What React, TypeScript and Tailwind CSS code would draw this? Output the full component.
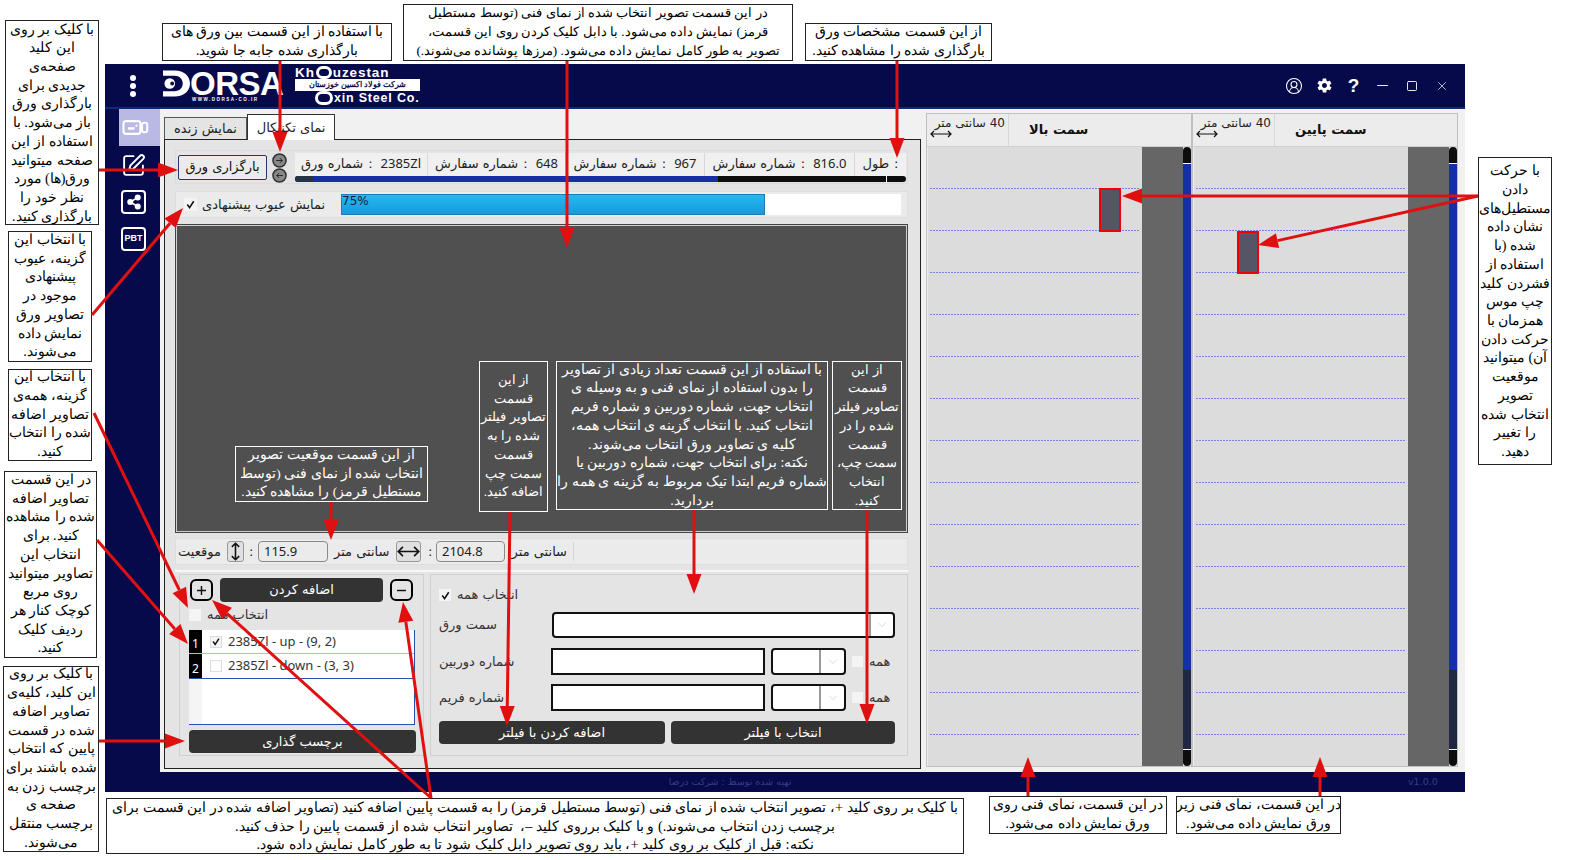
import { CircleUserRound, Minus, Square, SquarePen, X } from "lucide-react";
import { IoMdSettings } from "react-icons/io";

// Caixa de anotacao por cima da tela (uma linha por item, quebras iguais ao original)
function Callout({ className, lines, dark }: { className: string; lines: string[]; dark?: boolean }) {
  return (
    <div
      dir="rtl"
      className={`absolute z-10 flex flex-col items-center justify-center overflow-hidden whitespace-pre text-center font-['Liberation_Serif',serif] leading-[18.7px] ${
        dark ? "border border-white bg-[#505050] text-white" : "border border-[#222] bg-white text-black"
      } ${className}`}
    >
      {lines.map((l, i) => (
        <div key={i}>{l}</div>
      ))}
    </div>
  );
}

// Seta vermelha com ponta triangular
function Arrow({ x1, y1, x2, y2 }: { x1: number; y1: number; x2: number; y2: number }) {
  const len = Math.hypot(x2 - x1, y2 - y1);
  const ux = (x2 - x1) / len;
  const uy = (y2 - y1) / len;
  const bx = x2 - ux * 20;
  const by = y2 - uy * 20;
  const head = `${x2},${y2} ${bx - uy * 7.5},${by + ux * 7.5} ${bx + uy * 7.5},${by - ux * 7.5}`;
  return (
    <g>
      <line x1={x1} y1={y1} x2={bx} y2={by} stroke="#e01010" strokeWidth={3} />
      <polygon points={head} fill="#e01010" />
    </g>
  );
}

const arrows = [
  [99, 170, 178, 170],
  [280, 61, 280, 152],
  [567, 61, 567, 248],
  [897, 61, 897, 158],
  [92, 315, 183, 208],
  [94, 413, 188, 608],
  [97, 540, 188, 644],
  [99, 741, 185, 741],
  [431, 798, 212, 600],
  [431, 798, 403, 602],
  [331, 502, 331, 540],
  [510, 512, 507, 726],
  [694, 510, 694, 594],
  [867, 510, 867, 724],
  [1478, 196, 1122, 196],
  [1478, 196, 1258, 245],
  [1028, 796, 1028, 757],
  [1320, 796, 1320, 757],
];

// Checkbox simples
function Check({ checked, className = "" }: { checked?: boolean; className?: string }) {
  return (
    <span className={`flex h-[12px] w-[12px] shrink-0 items-center justify-center bg-[#f4f4f4] ${className}`}>
      {checked && (
        <svg viewBox="0 0 12 12" className="h-[11px] w-[11px]">
          <path d="M2.5 6 L5 9.5 L9.5 2.5" fill="none" stroke="#111" strokeWidth="1.7" />
        </svg>
      )}
    </span>
  );
}

function DarkButton({ className, children }: { className: string; children: string }) {
  return (
    <div dir="rtl" className={`flex items-center justify-center rounded-[4px] bg-[#333333] text-[13px] text-white ${className}`}>
      {children}
    </div>
  );
}

// Combo com seta cinza
function Combo({ className, sep }: { className: string; sep: string }) {
  return (
    <div className={`flex items-stretch rounded-[4px] border-2 border-[#111] bg-white ${className}`}>
      <div className="flex-1" />
      <div className={`flex items-center justify-center border-l-2 border-[#999] ${sep}`}>
        <svg viewBox="0 0 12 8" className="h-[6px] w-[10px]">
          <path d="M1 1 L6 6 L11 1" fill="none" stroke="#ccc" strokeWidth="1" />
        </svg>
      </div>
    </div>
  );
}

// Painel da vista tecnica (direita)
function SidePanel({ title, rectClass }: { title: string; rectClass: string }) {
  return (
    <div className="flex h-[654px] w-[266px] flex-col border border-[#c0c0c0] bg-[#ececec]">
      <div className="flex h-[33px] shrink-0 border-b border-[#d0d0d0] pl-[2px]">
        <div className="flex w-[80px] flex-col border-r border-[#d8d8d8] text-[12px] leading-[14px] text-[#222]">
          <span dir="rtl" className="pr-[3px] pt-[2px] text-right">40 سانتی متر</span>
          <svg viewBox="0 0 22 8" className="ml-[1px] h-[8px] w-[22px]">
            <path d="M1 4 H21 M4 1 L1 4 L4 7 M18 1 L21 4 L18 7" fill="none" stroke="#111" strokeWidth="1.2" />
          </svg>
        </div>
        <div dir="rtl" className="flex flex-1 items-center justify-end pl-[20px] text-[13px] font-bold text-[#111]">
          {title}
        </div>
      </div>
      <div className="flex flex-1 pl-[1px]">
        <div className="relative flex-1 bg-[#dcdcdc] px-[2px]">
          {Array.from({ length: 14 }).map((_, i) => (
            <div key={i} className="flex h-[42px] items-end">
              <div className="h-px w-full bg-[repeating-linear-gradient(90deg,#7f7fe8_0_2px,transparent_2px_3px)]" />
            </div>
          ))}
          <div className={`absolute border-2 border-[#f00000] bg-[#555566] ${rectClass}`} />
        </div>
        <div className="w-[41px] bg-[#666666]" />
        <div className="flex w-[8px] flex-col overflow-hidden rounded-full">
          <div className="h-[17px] border-b border-white bg-[#0d0d0d]" />
          <div className="h-[506px] bg-[#152fa8]" />
          <div className="flex-1 border-b border-white bg-[#1f2742]" />
          <div className="h-[16px] bg-[#0d0d0d]" />
        </div>
      </div>
    </div>
  );
}

function InfoCell({ className, label, value }: { className: string; label: string; value: string }) {
  return (
    <div className={`flex h-full items-center justify-center gap-[5px] whitespace-nowrap border-r border-[#d8d8d8] bg-[#f0f0f0] text-[13px] text-[#222] ${className}`}>
      <span dir="rtl">{label}</span>
      <span>:</span>
      {value && <span className="ml-[3px] font-['Noto_Sans',sans-serif]">{value}</span>}
    </div>
  );
}

export default function App() {
  return (
    <div className="relative h-[860px] w-[1570px] overflow-hidden bg-white pl-[105px] pt-[64px] font-['DejaVu_Sans',sans-serif]">
      {/* Janela do programa */}
      <div className="flex h-[728px] w-[1360px] flex-col bg-[#070a4a]">
        {/* Cabecalho */}
        <div className="flex h-[45px] shrink-0 items-center border-b-2 border-[#0d2a78] pr-[8px]">
          <div className="flex w-[58px] flex-col items-center gap-[2px] pr-[3px]">
            <span className="h-[6px] w-[6px] rounded-full bg-white" />
            <span className="h-[6px] w-[6px] rounded-full bg-white" />
            <span className="h-[6px] w-[6px] rounded-full bg-white" />
          </div>
          {/* Logo Dorsa */}
          <div className="flex w-[132px] flex-col text-white">
            <div className="flex h-[27px] items-center">
              <svg viewBox="0 0 28 27" className="h-[27px] w-[27px] shrink-0" fill="white">
                <path d="M0 0 H12 C22 0 28 6 28 13.5 C28 21 22 27 12 27 H0 V21.5 H12 C17 21.5 20.5 18 20.5 13.5 C20.5 9 17 5.5 12 5.5 H0 Z" />
                <circle cx="7" cy="13.5" r="5.5" />
                <circle cx="9.5" cy="13.5" r="2" fill="#070a4a" />
              </svg>
              <span className="font-['Liberation_Sans',sans-serif] text-[33px] font-bold leading-[27px] tracking-[-0.5px]">ORSA</span>
            </div>
            <span className="pl-[29px] font-['Liberation_Sans',sans-serif] text-[4.5px] font-bold leading-[5px] tracking-[1.5px]">WWW.DORSA-CO.IR</span>
          </div>
          {/* Logo Khouzestan */}
          <div className="flex w-[125px] flex-col font-['Liberation_Sans',sans-serif] font-bold text-white">
            <span className="flex h-[12px] items-center text-[13.5px] leading-[12px] tracking-[0.9px]">
              Kh<span className="mx-[1px] h-[13px] w-[16px] shrink-0 rounded-full border-[3px] border-white" />uzestan
            </span>
            <span dir="rtl" className="flex h-[12px] items-center justify-center bg-white text-[7.5px] leading-none text-[#070a4a]">
              شرکت فولاد اکسین خوزستان
            </span>
            <span className="flex h-[14px] items-center pl-[20px] text-[12.5px] leading-[12px] tracking-[0.8px]">
              <span className="mr-[1px] h-[14px] w-[18px] shrink-0 rounded-full border-[3px] border-white" />xin Steel Co.
            </span>
          </div>
          {/* Icones da janela */}
          <div className="ml-auto flex items-center text-white">
            <span className="flex w-[30px] justify-center"><CircleUserRound className="h-[18px] w-[18px]" strokeWidth={1.4} /></span>
            <span className="flex w-[30px] justify-center"><IoMdSettings className="h-[17px] w-[17px]" /></span>
            <span className="w-[29px] text-center font-['Liberation_Sans',sans-serif] text-[19px] font-bold leading-none">?</span>
            <span className="flex w-[29px] justify-center"><Minus className="h-[17px] w-[17px]" strokeWidth={1.3} /></span>
            <span className="flex w-[30px] justify-center"><Square className="h-[12px] w-[12px]" strokeWidth={1.8} /></span>
            <span className="flex w-[30px] justify-center"><X className="h-[14px] w-[14px]" strokeWidth={1.2} /></span>
          </div>
        </div>

        <div className="flex h-[663px] shrink-0">
          {/* Barra lateral */}
          <div className="w-[55px] shrink-0 pl-[14px]">
            <div className="flex h-[37px] w-[41px] items-center justify-center bg-[#b9b9e6] pr-[8px]">
              <svg viewBox="0 0 28 16" className="h-[15px] w-[27px] shrink-0" fill="none" stroke="white" strokeWidth="2.2">
                <rect x="1.2" y="1.2" width="18" height="13.6" rx="2.5" />
                <rect x="21" y="3" width="5.5" height="10" rx="2" />
                <path d="M6 9 H13" strokeWidth="2.6" />
                <circle cx="15" cy="6" r="1.2" fill="white" stroke="none" />
              </svg>
            </div>
            <div className="mt-[7px] flex w-[41px] flex-col items-center gap-[13px] pr-[12px]">
              <div className="flex h-[24px] w-[25px] items-center justify-center text-white">
                <SquarePen className="h-[25px] w-[25px]" strokeWidth={1.8} />
              </div>
              <div className="flex h-[24px] w-[25px] items-center justify-center rounded-[4px] border-2 border-white">
                <svg viewBox="0 0 24 24" className="h-[18px] w-[18px]" fill="white" stroke="white" strokeWidth="2">
                  <path d="M7 12 L17 6 M7 12 L17 18" />
                  <circle cx="7" cy="12" r="3" />
                  <circle cx="17" cy="6" r="3" />
                  <circle cx="17" cy="18" r="3" />
                </svg>
              </div>
              <div className="flex h-[24px] w-[25px] items-center justify-center rounded-[4px] border-2 border-white font-['Liberation_Sans',sans-serif] text-[9px] font-bold text-white">
                PBT
              </div>
            </div>
          </div>

          {/* Area principal */}
          <div className="flex flex-1 bg-[#f1f1f1] pl-[4px] pt-[4px]">
            {/* Coluna esquerda com abas */}
            <div className="mt-[1px] flex h-[655px] w-[757px] flex-col">
              <div dir="ltr" className="flex h-[25px] shrink-0 items-end">
                <div dir="rtl" className="flex h-[22px] w-[83px] items-center justify-center border border-b-0 border-[#555] bg-[#e4e4e4] text-[13px] text-[#222]">
                  نمایش زنده
                </div>
                <div dir="rtl" className="z-[1] -mb-px flex h-[26px] w-[88px] items-center justify-center border border-b-0 border-[#333] bg-white text-[13px] text-[#222]">
                  نمای تکنیکال
                </div>
              </div>
              <div className="flex h-[630px] flex-col border border-[#222] bg-[#e4e4e4] pl-[10px] pr-[12px] pt-[10px]">
                {/* Linha do botao e especificacoes */}
                <div className="flex h-[34px] items-center border border-[#dcdcdc] pl-[2px]">
                  <div dir="rtl" className="flex h-[25px] w-[89px] items-center justify-center rounded-[2px] border border-[#1e3a6e] bg-[#ebebeb] text-[13px] text-[#111]">
                    بارگزاری ورق
                  </div>
                  <div className="ml-[5px] flex w-[16px] flex-col pt-[2px]">
                    {[0, 1].map((i) => (
                      <svg key={i} viewBox="0 0 16 16" className="h-[15px] w-[15px]">
                        <circle cx="8" cy="8" r="7" fill="#888" stroke="#333" strokeWidth="1.6" />
                        <path d={i === 0 ? "M4.5 8 H11 M8.5 5.5 L11 8 L8.5 10.5" : "M11.5 8 H5 M7.5 5.5 L5 8 L7.5 10.5"} fill="none" stroke="#222" strokeWidth="1" />
                      </svg>
                    ))}
                  </div>
                  <div className="ml-[7px] flex w-[611px] flex-col">
                    <div className="flex h-[23px]">
                      <InfoCell className="w-[133px]" label="شماره ورق" value="2385Zl" />
                      <InfoCell className="w-[138px]" label="شماره سفارش" value="648" />
                      <InfoCell className="w-[139px]" label="شماره سفارش" value="967" />
                      <InfoCell className="w-[150px]" label="شماره سفارش" value="816.0" />
                      <InfoCell className="w-[51px] border-r-0" label="طول" value="" />
                    </div>
                    <div className="flex h-[6px] overflow-hidden rounded-full bg-[#0d0d0d]">
                      <div className="w-[18px] bg-[#263245]" />
                      <div className="w-[405px] bg-[#172ea6]" />
                      <div className="ml-[168px] w-px bg-white" />
                    </div>
                  </div>
                </div>

                {/* Defeitos sugeridos e progresso */}
                <div className="mt-[7px] flex h-[27px] items-center border border-[#dedede] bg-[#ebebeb] pl-[8px]">
                  <Check checked className="h-[13px] w-[13px]" />
                  <span dir="rtl" className="ml-[5px] w-[124px] whitespace-nowrap text-left text-[13px] text-[#222]">
                    نمایش عیوب پیشنهادی
                  </span>
                  <div className="ml-[15px] flex h-[21px] w-[560px] bg-white">
                    <div className="h-full w-[424px] border border-[#1a7fb8] bg-linear-to-b from-[#23b8f5] to-[#1a9ad8] text-[12px] leading-[12px] text-[#123]">
                      75%
                    </div>
                  </div>
                </div>

                {/* Imagem selecionada */}
                <div className="mt-[6px] h-[309px] border border-[#444] bg-[#505050]">
                  <div className="h-full border border-[#d0d0d0]" />
                </div>

                {/* Posicao */}
                <div className="mt-[5px] flex h-[27px] items-center border border-[#dedede] bg-[#ebebeb] pl-[2px] text-[13px] text-[#222]">
                  <span dir="rtl" className="w-[49px] whitespace-nowrap text-left">موقعیت</span>
                  <div className="flex h-[21px] w-[17px] items-center justify-center rounded-[3px] border border-[#999] bg-[#e0e0e0]">
                    <svg viewBox="0 0 12 20" className="h-[19px] w-[11px]">
                      <path d="M6 1 V19 M2 5 L6 1 L10 5 M2 15 L6 19 L10 15" fill="none" stroke="#111" strokeWidth="1.7" />
                    </svg>
                  </div>
                  <span className="ml-[5px] w-[9px] text-[13px]">:</span>
                  <div className="flex h-[21px] w-[70px] items-center rounded-[4px] border border-[#8a8a8a] pl-[5px] font-['Noto_Sans',sans-serif]">115.9</div>
                  <span dir="rtl" className="ml-[6px] w-[62px] whitespace-nowrap text-left">سانتی متر</span>
                  <div className="flex h-[21px] w-[25px] items-center justify-center rounded-[3px] border border-[#999] bg-[#e0e0e0]">
                    <svg viewBox="0 0 24 14" className="h-[13px] w-[23px]">
                      <path d="M1 7 H23 M6 2 L1 7 L6 12 M18 2 L23 7 L18 12" fill="none" stroke="#111" strokeWidth="1.8" />
                    </svg>
                  </div>
                  <span className="ml-[7px] w-[8px] text-[13px]">:</span>
                  <div className="flex h-[21px] w-[69px] items-center rounded-[4px] border border-[#8a8a8a] pl-[5px] font-['Noto_Sans',sans-serif]">2104.8</div>
                  <span dir="rtl" className="ml-[7px] w-[62px] whitespace-nowrap border-r border-[#d5d5d5] pr-[6px] text-left">سانتی متر</span>
                </div>

                {/* Parte de baixo */}
                <div className="mt-[5px] flex h-[189px] gap-[6px] border-t-2 border-[#f6f6f6] px-[4px] pb-[3px] pt-[2px]">
                  {/* Lista de imagens */}
                  <div className="flex w-[245px] flex-col border border-[#d0d0d0] px-[9px] pt-[3px]">
                    <div className="flex items-center gap-[7px] pl-[1px]">
                      <div className="flex h-[22px] w-[23px] items-center justify-center rounded-[6px] border-2 border-black">
                        <svg viewBox="0 0 10 10" className="h-[9px] w-[9px]">
                          <path d="M5 0 V10 M0 5 H10" stroke="#111" strokeWidth="1.6" />
                        </svg>
                      </div>
                      <DarkButton className="h-[24px] w-[163px]">اضافه کردن</DarkButton>
                      <div className="flex h-[22px] w-[23px] items-center justify-center rounded-[6px] border-2 border-black">
                        <svg viewBox="0 0 10 10" className="h-[9px] w-[9px]">
                          <path d="M0 5 H10" stroke="#111" strokeWidth="1.6" />
                        </svg>
                      </div>
                    </div>
                    <div className="mt-[7px] flex h-[12px] items-center gap-[6px]">
                      <Check />
                      <span dir="rtl" className="text-[13px] text-[#333]">انتخاب همه</span>
                    </div>
                    <div className="mt-[9px] flex h-[95px] w-[226px] flex-col border-b border-r border-[#2a4fae] bg-white font-['Noto_Sans',sans-serif] text-[13px] text-[#333]">
                      <div className="flex h-[24px] border-b border-[#a9bde6]">
                        <div className="flex w-[13px] items-end justify-center bg-black text-[12px] text-white">1</div>
                        <div className="flex flex-1 items-center gap-[6px] pl-[8px]">
                          <Check checked className="border border-[#ddd]" />
                          2385Zl - up - (9, 2)
                        </div>
                      </div>
                      <div className="flex h-[25px] border-b border-[#2a4fae]">
                        <div className="flex w-[13px] items-end justify-center bg-black text-[12px] text-white">2</div>
                        <div className="flex flex-1 items-center gap-[6px] pl-[8px]">
                          <Check className="border border-[#ddd] bg-white" />
                          2385Zl - down - (3, 3)
                        </div>
                      </div>
                      <div className="w-[13px] flex-1 bg-[#f5f5f5]" />
                    </div>
                    <DarkButton className="mt-[5px] h-[23px] w-[227px]">برچسب گذاری</DarkButton>
                  </div>

                  {/* Filtros */}
                  <div className="flex flex-1 flex-col border border-[#d0d0d0] pl-[8px] pr-[12px] pt-[14px] text-[13px] text-[#333]">
                    <div className="flex h-[12px] items-center gap-[6px]">
                      <Check checked />
                      <span dir="rtl">انتخاب همه</span>
                    </div>
                    <div className="mt-[11px] flex h-[26px] items-center">
                      <span dir="rtl" className="w-[113px] text-left">سمت ورق</span>
                      <Combo className="h-[26px] flex-1" sep="w-[24px]" />
                    </div>
                    <div className="mt-[10px] flex h-[27px] items-center">
                      <span dir="rtl" className="w-[112px] whitespace-nowrap text-left">شماره دوربین</span>
                      <div className="h-[27px] w-[214px] border-2 border-[#111] bg-white" />
                      <Combo className="ml-[6px] h-[27px] w-[75px]" sep="w-[25px]" />
                      <Check className="ml-[5px] h-[13px] w-[13px] border border-[#e4e4e4]" />
                      <span dir="rtl" className="ml-[5px]">همه</span>
                    </div>
                    <div className="mt-[9px] flex h-[27px] items-center">
                      <span dir="rtl" className="w-[112px] whitespace-nowrap text-left">شماره فریم</span>
                      <div className="h-[27px] w-[214px] border-2 border-[#111] bg-white" />
                      <Combo className="ml-[6px] h-[27px] w-[75px]" sep="w-[25px]" />
                      <Check className="ml-[5px] h-[13px] w-[13px] border border-[#e4e4e4]" />
                      <span dir="rtl" className="ml-[5px]">همه</span>
                    </div>
                    <div className="mt-[10px] flex gap-[6px]">
                      <DarkButton className="h-[23px] w-[226px]">اضافه کردن با فیلتر</DarkButton>
                      <DarkButton className="h-[23px] w-[224px]">انتخاب با فیلتر</DarkButton>
                    </div>
                  </div>
                </div>
              </div>
            </div>

            {/* Vistas tecnicas */}
            <div className="ml-[5px] flex">
              <SidePanel title="سمت بالا" rectClass="left-[171px] top-[41px] h-[44px] w-[22px]" />
              <SidePanel title="سمت پایین" rectClass="left-[43px] top-[84px] h-[43px] w-[22px]" />
            </div>
          </div>
        </div>

        {/* Rodape */}
        <div className="relative flex h-[20px] shrink-0 items-center justify-center text-[9.5px] text-[#343c86]">
          <span dir="rtl" className="mr-[110px]">تهیه شده توسط : شرکت درصا</span>
          <span className="absolute left-[1303px]">v1.0.0</span>
        </div>
      </div>

      {/* Setas das anotacoes */}
      <svg className="pointer-events-none absolute left-0 top-0 z-20 h-[860px] w-[1570px]" viewBox="0 0 1570 860">
        {arrows.map((a, i) => (
          <Arrow key={i} x1={a[0]} y1={a[1]} x2={a[2]} y2={a[3]} />
        ))}
      </svg>

      {/* Anotacoes */}
      <Callout className="left-[5px] top-[20px] h-[205px] w-[94px] text-[14.2px]" lines={["با کلیک بر روی", "این کلید", "صفحه‌ی", "جدیدی برای", "بارگذاری ورق", "باز می‌شود. با", "استفاده از این", "صفحه میتوانید", "ورق(ها) مورد", "نظر خود را", "بارگذاری کنید."]} />
      <Callout className="left-[162px] top-[23px] h-[38px] w-[230px] text-[13.6px]" lines={["با استفاده از این قسمت بین ورق های", "بارگذاری شده جابه جا شوید."]} />
      <Callout className="left-[403px] top-[4px] h-[57px] w-[390px] text-[13.2px]" lines={["در این قسمت تصویر انتخاب شده از نمای فنی (توسط مستطیل", "قرمز) نمایش داده می‌شود. با دابل کلیک کردن روی این قسمت،", "تصویر به طور کامل نمایش داده می‌شود. (مرزها پوشانده می‌شوند.)"]} />
      <Callout className="left-[805px] top-[23px] h-[38px] w-[187px] text-[13.9px]" lines={["از این قسمت مشخصات ورق", "بارگذاری شده را مشاهده کنید."]} />
      <Callout className="left-[8px] top-[231px] h-[131px] w-[84px] text-[14px]" lines={["با انتخاب این", "گزینه، عیوب", "پیشنهادی", "موجود در", "تصاویر ورق", "نمایش داده", "می‌شوند."]} />
      <Callout className="left-[8px] top-[369px] h-[92px] w-[84px] text-[13.6px]" lines={["با انتخاب این", "گزینه، همه‌ی", "تصاویر اضافه", "شده را انتخاب", "کنید."]} />
      <Callout className="left-[4px] top-[471px] h-[187px] w-[93px] text-[14px]" lines={["در این قسمت", "تصاویر اضافه", "شده را مشاهده", "کنید. برای", "انتخاب این", "تصاویر میتوانید", "روی مربع", "کوچک کنار هر", "ردیف کلیک", "کنید."]} />
      <Callout className="left-[3px] top-[666px] h-[186px] w-[96px] text-[14px]" lines={["با کلیک بر روی", "این کلید، کلیه‌ی", "تصاویر اضافه", "شده در قسمت", "پایین که انتخاب", "شده باشند برای", "برچسب زدن به", "صفحه ی", "برچسب منتقل", "می‌شوند."]} />
      <Callout className="left-[106px] top-[798px] h-[56px] w-[858px] text-[14.3px]" lines={["با کلیک بر روی کلید +، تصویر انتخاب شده از نمای فنی (توسط مستطیل قرمز) را به قسمت پایین اضافه کنید (تصاویر اضافه شده در این قسمت برای", "برچسب زدن انتخاب می‌شوند.) و با کلیک برروی کلید –،  تصاویر انتخاب شده از قسمت پایین را حذف کنید.", "نکته: قبل از کلیک بر روی کلید +، باید روی تصویر دابل کلیک شود تا به طور کامل نمایش داده شود."]} />
      <Callout className="left-[989px] top-[796px] h-[38px] w-[178px] text-[13.9px]" lines={["در این قسمت، نمای فنی روی", "ورق نمایش داده می‌شود."]} />
      <Callout className="left-[1176px] top-[796px] h-[38px] w-[165px] text-[13.9px]" lines={["در این قسمت، نمای فنی زیر", "ورق نمایش داده می‌شود."]} />
      <Callout className="left-[1478px] top-[157px] h-[308px] w-[74px] text-[14.2px]" lines={["با حرکت", "دادن", "مستطیل‌های", "نشان داده", "شده (با", "استفاده از", "فشردن کلید", "چپ موس", "همزمان با", "حرکت دادن", "آن) میتوانید", "موقعیت", "تصویر", "انتخاب شده", "را تغییر", "دهید."]} />
      <Callout dark className="left-[235px] top-[446px] h-[56px] w-[193px] text-[13.5px]" lines={["از این قسمت موقعیت تصویر", "انتخاب شده از نمای فنی (توسط", "مستطیل قرمز) را مشاهده کنید."]} />
      <Callout dark className="left-[479px] top-[361px] h-[151px] w-[69px] text-[13.3px]" lines={["از این", "قسمت", "تصاویر فیلتر", "شده را به", "قسمت", "سمت چپ", "اضافه کنید."]} />
      <Callout dark className="left-[556px] top-[361px] h-[149px] w-[272px] text-[13.9px]" lines={["با استفاده از این قسمت تعداد زیادی از تصاویر", "را بدون استفاده از نمای فنی و به وسیله ی", "انتخاب جهت، شماره دوربین و شماره فریم", "انتخاب کنید. با انتخاب گزینه ی انتخاب همه،", "کلیه ی تصاویر ورق انتخاب می‌شوند.", "نکته: برای انتخاب جهت، شماره دوربین یا", "شماره فریم ابتدا تیک مربوط به گزینه ی همه را", "بردارید."]} />
      <Callout dark className="left-[832px] top-[361px] h-[149px] w-[70px] text-[13.3px]" lines={["از این", "قسمت", "تصاویر فیلتر", "شده را در", "قسمت", "سمت چپ،", "انتخاب", "کنید."]} />
    </div>
  );
}
